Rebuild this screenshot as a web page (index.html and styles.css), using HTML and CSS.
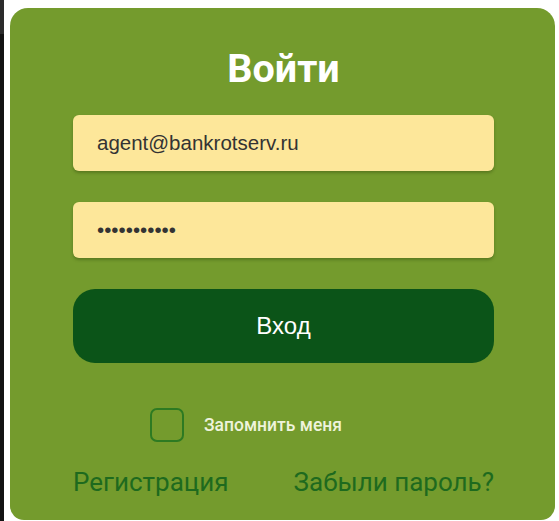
FILE: index.html
```html
<!DOCTYPE html>
<html lang="ru">
<head>
<meta charset="utf-8">
<title>Войти</title>
<link rel="stylesheet" href="styles.css">
</head>
<body>
<div class="screen">
  <div class="edge"></div>
  <main class="card">
    <h1 class="title">Войти</h1>
    <form class="form">
      <input class="field" type="text" value="agent@bankrotserv.ru">
      <input class="field" type="password" value="12345678901">
      <button class="submit" type="button">Вход</button>
      <label class="remember">
        <input class="check" type="checkbox">
        <span class="remember-text">Запомнить меня</span>
      </label>
      <div class="links">
        <a class="link" href="#">Регистрация</a>
        <a class="link" href="#">Забыли пароль?</a>
      </div>
    </form>
  </main>
</div>
</body>
</html>
```

FILE: styles.css
```css
html, body {
  margin: 0;
  padding: 0;
  background: #ffffff;
}

.screen {
  display: flex;
  align-items: flex-start;
  height: 521px;
  overflow: hidden;
}

.edge {
  width: 4px;
  height: 521px;
  flex: none;
  background: linear-gradient(#2b2b2b 0, #2b2b2b 34px, #121212 34px, #121212 100%);
}

.card {
  box-sizing: border-box;
  flex: none;
  width: 545px;
  height: 512px;
  margin: 8px 0 0 6px;
  padding: 39px 61px 0 63px;
  background: #749b2d;
  border-radius: 18px 18px 14px 14px;
  display: flex;
  flex-direction: column;
}

.title {
  margin: 0;
  font-family: Roboto, "Liberation Sans", sans-serif;
  font-weight: 700;
  font-size: 39.5px;
  line-height: 44px;
  color: #ffffff;
  text-align: center;
}

.form {
  margin-top: 24px;
  display: flex;
  flex-direction: column;
}

.field {
  box-sizing: border-box;
  height: 56px;
  width: 100%;
  margin: 0 0 31px 0;
  padding: 0 24px;
  border: none;
  border-radius: 6px;
  background: #fde79a;
  box-shadow: 0 2px 3px rgba(40, 60, 10, 0.35);
  font-family: "Liberation Sans", Arial, sans-serif;
  font-size: 20.5px;
  color: #333333;
  outline: none;
}

.submit {
  box-sizing: border-box;
  height: 74px;
  width: 100%;
  border: none;
  border-radius: 22px;
  background: #0b5418;
  color: #ffffff;
  font-family: "Liberation Sans", Arial, sans-serif;
  font-size: 24px;
  cursor: pointer;
}

.remember {
  margin-top: 45px;
  padding-left: 77px;
  display: flex;
  align-items: center;
  gap: 20px;
  height: 34px;
}

.check {
  appearance: none;
  -webkit-appearance: none;
  box-sizing: border-box;
  margin: 0;
  width: 34px;
  height: 34px;
  border: 2px solid #2d7a22;
  border-radius: 7px;
  background: transparent;
}

.remember-text {
  font-family: Roboto, "Liberation Sans", sans-serif;
  font-weight: 500;
  font-size: 17.5px;
  color: #eef3dc;
}

.links {
  margin-top: 25px;
  display: flex;
  justify-content: space-between;
}

.link {
  font-family: Roboto, "Liberation Sans", sans-serif;
  font-size: 26px;
  line-height: 30px;
  color: #1e6a1e;
  text-decoration: none;
}
```
